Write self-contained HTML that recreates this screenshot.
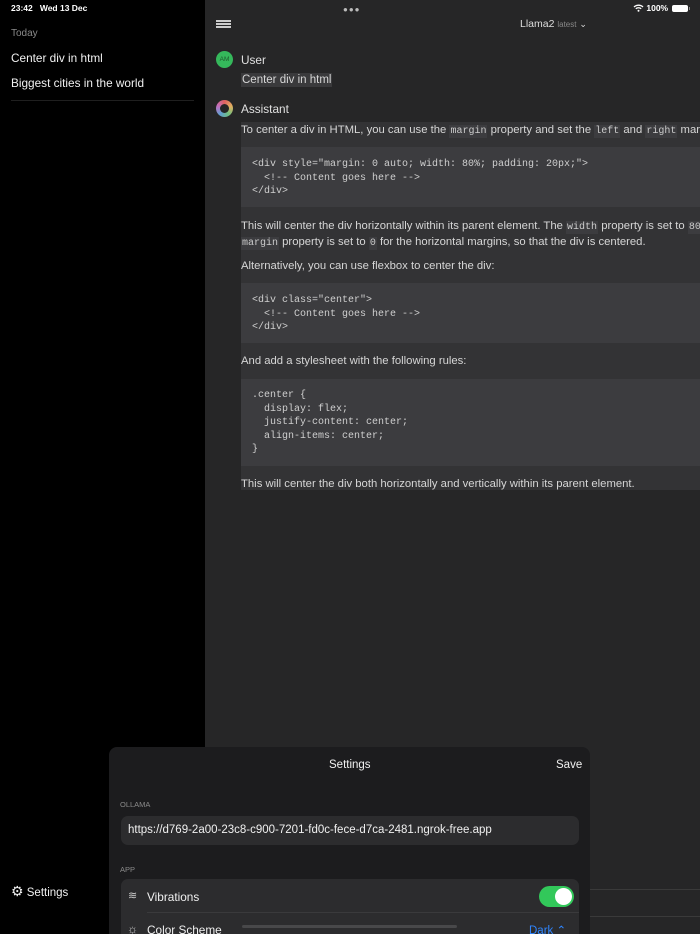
<!DOCTYPE html>
<html><head><style>
*{margin:0;padding:0;box-sizing:border-box}
html,body{width:700px;height:934px;overflow:hidden}
body{background:#000;font-family:"Liberation Sans",sans-serif;color:#e0e0e0;position:relative}
.abs{position:absolute}
.side{left:0;top:0;width:205px;height:934px;background:#000}
.main{left:205px;top:0;width:495px;height:934px;background:#262627}
.t{font-size:12px;white-space:nowrap}
code{font-family:"Liberation Mono",monospace;font-size:10px;background:#3c3c3f;padding:1px 1px;color:#ccc}
.code{left:241px;width:459px;background:#3c3c3f}
.code div{font-family:"Liberation Mono",monospace;font-size:10px;color:#cfcfcf;line-height:13.5px;white-space:pre}
.p{font-size:11.3px;color:#d6d6d6;white-space:nowrap}
</style></head><body>
<div class="abs side"></div>
<div class="abs main"></div>
<div class="abs t" style="left:11px;top:3px;font-size:8.5px;font-weight:bold;color:#fff">23:42&nbsp;&nbsp; Wed 13 Dec</div>
<div class="abs t" style="left:11px;top:28px;font-size:10px;color:#8a8a8a">Today</div>
<div class="abs t" style="left:11px;top:51px;font-size:11.8px;color:#f0f0f0">Center div in html</div>
<div class="abs t" style="left:11px;top:76px;font-size:11.8px;color:#f0f0f0">Biggest cities in the world</div>
<div class="abs" style="left:11px;top:100px;width:183px;height:1px;background:#1f1f1f"></div>
<div class="abs" style="left:11px;top:883px;font-size:11.5px;color:#f0f0f0"><span style="font-size:14px">⚙</span> Settings</div>
<!-- status -->
<div class="abs" style="left:343px;top:5px;font-size:8px;color:#bbb;letter-spacing:1px">●●●</div>
<div class="abs t" style="left:633px;top:3px;font-size:8.5px;color:#fff;font-weight:bold">
<svg width="11" height="8" viewBox="0 0 11 8" style="vertical-align:-1px"><path d="M1 3a6.5 6.5 0 0 1 9 0M2.8 4.8a4 4 0 0 1 5.4 0" stroke="#fff" stroke-width="1.3" fill="none"/><circle cx="5.5" cy="6.8" r="1" fill="#fff"/></svg> 100%</div>
<div class="abs" style="left:672px;top:5px;width:16px;height:7px;border-radius:2px;background:#fff"></div>
<div class="abs" style="left:689px;top:7px;width:1px;height:3px;background:#888"></div>
<!-- header -->
<div class="abs" style="left:216px;top:20px;width:15px;height:1.5px;background:#ccc;box-shadow:0 3px 0 #ccc,0 6px 0 #ccc"></div>
<div class="abs t" style="left:520px;top:18px;font-size:10.5px;color:#ddd">Llama2 <span style="font-size:8px;color:#888">latest</span> <span style="font-size:9px">⌄</span></div>
<!-- user -->
<div class="abs" style="left:216px;top:51px;width:17px;height:17px;border-radius:50%;background:#35b85b;color:#1c5a2c;font-size:6.5px;text-align:center;line-height:17px">AM</div>
<div class="abs t" style="left:241px;top:53px;font-size:11.8px">User</div>
<div class="abs p" style="left:241px;top:73px;background:#3a3a3c;padding:1px 1px;font-size:11.5px">Center div in html</div>
<!-- assistant -->
<div class="abs" style="left:216px;top:100px;width:17px;height:17px;border-radius:50%;background:conic-gradient(#e06060,#e0b060,#70c080,#60a0d0,#c070c0,#e06060)"></div>
<div class="abs" style="left:220px;top:104px;width:9px;height:9px;border-radius:50%;background:#262627"></div>
<div class="abs t" style="left:241px;top:102px;font-size:11.8px">Assistant</div>
<div class="abs" style="left:241px;top:122px;width:459px;height:368px;background:#333335"></div>
<div class="abs p" style="left:241px;top:124px">To center a div in HTML, you can use the <code>margin</code> property and set the <code>left</code> and <code>right</code> margins</div>
<div class="abs code" style="top:147px;height:60px;padding:11px 11px"><div>&lt;div style="margin: 0 auto; width: 80%; padding: 20px;"&gt;
  &lt;!-- Content goes here --&gt;
&lt;/div&gt;</div></div>
<div class="abs p" style="left:241px;top:220px">This will center the div horizontally within its parent element. The <code>width</code> property is set to <code>80%</code></div>
<div class="abs p" style="left:241px;top:236px"><code>margin</code> property is set to <code>0</code> for the horizontal margins, so that the div is centered.</div>
<div class="abs p" style="left:241px;top:260px">Alternatively, you can use flexbox to center the div:</div>
<div class="abs code" style="top:283px;height:60px;padding:11px 11px"><div>&lt;div class="center"&gt;
  &lt;!-- Content goes here --&gt;
&lt;/div&gt;</div></div>
<div class="abs p" style="left:241px;top:355px">And add a stylesheet with the following rules:</div>
<div class="abs code" style="top:379px;height:87px;padding:10px 11px"><div>.center {
  display: flex;
  justify-content: center;
  align-items: center;
}</div></div>
<div class="abs p" style="left:241px;top:478px">This will center the div both horizontally and vertically within its parent element.</div>
<!-- bottom lines right -->
<div class="abs" style="left:590px;top:889px;width:110px;height:1px;background:#3a3a3a"></div>
<div class="abs" style="left:590px;top:916px;width:110px;height:1px;background:#3a3a3a"></div>
<!-- sheet -->
<div class="abs" style="left:109px;top:747px;width:481px;height:200px;background:#1c1c1e;border-radius:8px"></div>
<div class="abs t" style="left:329px;top:759px;font-size:11.5px;color:#f0f0f0">Settings</div>
<div class="abs t" style="left:556px;top:759px;font-size:11.5px;color:#f0f0f0">Save</div>
<div class="abs t" style="left:120px;top:800px;font-size:7.5px;color:#8a8a8a">OLLAMA</div>
<div class="abs" style="left:121px;top:816px;width:458px;height:29px;background:#2c2c2e;border-radius:7px"></div>
<div class="abs t" style="left:128px;top:824px;font-size:11.5px;color:#f0f0f0">https://d769-2a00-23c8-c900-7201-fd0c-fece-d7ca-2481.ngrok-free.app</div>
<div class="abs t" style="left:120px;top:865px;font-size:7.5px;color:#8a8a8a">APP</div>
<div class="abs" style="left:121px;top:879px;width:458px;height:70px;background:#2c2c2e;border-radius:7px"></div>
<div class="abs t" style="left:128px;top:889px;font-size:11px;color:#ccc">≋</div>
<div class="abs t" style="left:147px;top:890px;font-size:11.8px;color:#f0f0f0">Vibrations</div>
<div class="abs" style="left:539px;top:886px;width:35px;height:21px;border-radius:11px;background:#32c85a"></div>
<div class="abs" style="left:555px;top:888px;width:17px;height:17px;border-radius:50%;background:#fff"></div>
<div class="abs" style="left:147px;top:912px;width:432px;height:1px;background:#3a3a3c"></div>
<div class="abs t" style="left:127px;top:922px;font-size:12px;color:#ccc">☼</div>
<div class="abs t" style="left:147px;top:923px;font-size:11.8px;color:#f0f0f0">Color Scheme</div>
<div class="abs" style="left:242px;top:925px;width:215px;height:3px;border-radius:2px;background:#48484a"></div>
<div class="abs t" style="left:529px;top:923px;font-size:11.5px;color:#2f85ff">Dark ⌃</div>
</body></html>
